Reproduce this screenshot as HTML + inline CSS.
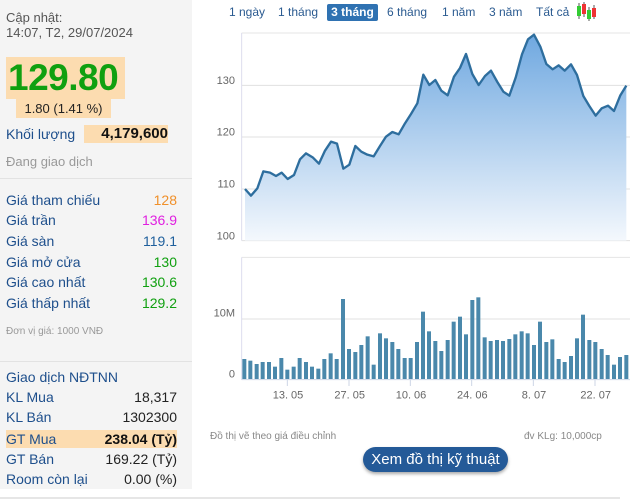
<!DOCTYPE html>
<html><head><meta charset="utf-8"><style>
body{margin:0;width:640px;height:499px;background:#fff;font-family:"Liberation Sans",Arial,sans-serif;position:relative;overflow:hidden}
.a{position:absolute;white-space:nowrap}
#lp{position:absolute;left:0;top:0;width:192px;height:489px;background:#f4f4f4}
.lbl{color:#1e4f8c;font-size:14px}
.r{position:absolute;left:6px;width:171px;font-size:14px;height:18px;line-height:18px}
.r span{position:absolute;right:0;top:0}
.tab{position:absolute;top:4px;font-size:12px;color:#2a5a90;line-height:17px}
</style></head><body>
<div id="lp">
<div class="a" style="left:6px;top:10px;font-size:13px;color:#555">Cập nhật:</div>
<div class="a" style="left:6px;top:25px;font-size:13px;color:#555">14:07, T2, 29/07/2024</div>
<div class="a" style="left:6px;top:57px;width:119px;height:42px;background:#fcdcb0"></div>
<div class="a" style="left:8px;top:57px;font-size:37px;font-weight:bold;color:#10a010;line-height:42px;letter-spacing:-0.5px">129.80</div>
<div class="a" style="left:16px;top:99px;width:95px;height:19px;background:#fcdcb0;font-size:13px;text-align:center;line-height:19px;color:#222">1.80 (1.41 %)</div>
<div class="a lbl" style="left:6px;top:126px;font-size:14px">Khối lượng</div>
<div class="a" style="left:84px;top:125px;width:84px;height:18px;background:#fcdcb0;font-size:15px;font-weight:bold;text-align:right;line-height:18px;color:#111">4,179,600</div>
<div class="a" style="left:6px;top:154px;font-size:13px;color:#999">Đang giao dịch</div>
<div class="a" style="left:0;top:178px;width:192px;height:1px;background:#e2e2e2"></div>
<div class="r lbl" style="top:191px">Giá tham chiếu<span style="color:#f0902a">128</span></div>
<div class="r lbl" style="top:211px">Giá trần<span style="color:#e020e0">136.9</span></div>
<div class="r lbl" style="top:232px">Giá sàn<span style="color:#1e5f9c">119.1</span></div>
<div class="r lbl" style="top:253px">Giá mở cửa<span style="color:#10a010">130</span></div>
<div class="r lbl" style="top:273px">Giá cao nhất<span style="color:#10a010">130.6</span></div>
<div class="r lbl" style="top:294px">Giá thấp nhất<span style="color:#10a010">129.2</span></div>
<div class="a" style="left:6px;top:326px;font-size:10px;color:#999">Đơn vị giá: 1000 VNĐ</div>
<div class="a" style="left:0;top:361px;width:192px;height:1px;background:#e2e2e2"></div>
<div class="r lbl" style="top:368px">Giao dịch NĐTNN</div>
<div class="r lbl" style="top:388px">KL Mua<span style="color:#222">18,317</span></div>
<div class="r lbl" style="top:408px">KL Bán<span style="color:#222">1302300</span></div>
<div class="r lbl" style="top:430px;background:#fcdcb0">GT Mua<span style="color:#111;font-weight:bold">238.04 (Tỷ)</span></div>
<div class="r lbl" style="top:450px">GT Bán<span style="color:#222">169.22 (Tỷ)</span></div>
<div class="r lbl" style="top:470px">Room còn lại<span style="color:#222">0.00 (%)</span></div>
</div>
<div class="a" style="left:0;top:497px;width:620px;height:2px;background:#e6e6e6"></div>

<div class="tab" style="left:229px">1 ngày</div>
<div class="tab" style="left:278px">1 tháng</div>
<div class="tab" style="left:327px;top:4px;width:51px;height:17px;background:#2f72b2;border-radius:2px;color:#fff;text-align:center;font-weight:bold">3 tháng</div>
<div class="tab" style="left:387px">6 tháng</div>
<div class="tab" style="left:442px">1 năm</div>
<div class="tab" style="left:489px">3 năm</div>
<div class="tab" style="left:536px">Tất cả</div>
<svg class="a" style="left:576px;top:2px" width="24" height="20">
<line x1="3" y1="1" x2="3" y2="17" stroke="#555"/><rect x="1" y="4" width="4" height="10" fill="#3c3"/>
<line x1="8" y1="0" x2="8" y2="15" stroke="#555"/><rect x="6" y="2" width="4" height="10" fill="#e33"/>
<line x1="13" y1="5" x2="13" y2="19" stroke="#555"/><rect x="11" y="8" width="4" height="9" fill="#3c3"/>
<line x1="18" y1="3" x2="18" y2="17" stroke="#555"/><rect x="16" y="6" width="4" height="9" fill="#e33"/>
</svg>

<svg class="a" style="left:200px;top:0" width="440" height="250" viewBox="0 0 1320 750">
<defs><linearGradient id="g" x1="0" y1="0" x2="0" y2="1"><stop offset="0" stop-color="#6fa8e0"/><stop offset="1" stop-color="#f4f8fd"/></linearGradient></defs>
<line x1="125" y1="99" x2="1290" y2="99" stroke="#e4e4e4" stroke-width="3"/>
<g stroke="#e0e0e0" stroke-width="3"><line x1="125" y1="256" x2="1290" y2="256"/><line x1="125" y1="411" x2="1290" y2="411"/><line x1="125" y1="567" x2="1290" y2="567"/><line x1="125" y1="722" x2="1290" y2="722"/></g>
<line x1="125" y1="99" x2="125" y2="722" stroke="#dde" stroke-width="3"/>
<polygon fill="url(#g)" points="135,722 135,567 153,587 172,565 190,514 210,518 228,528 245,518 263,537 282,525 300,478 318,460 338,472 357,491 375,452 393,425 411,431 430,506 448,494 466,438 484,455 502,464 521,469 540,438 558,410 577,396 596,403 615,370 633,342 652,310 670,224 688,255 706,240 724,272 743,286 762,230 780,204 798,162 817,222 836,255 855,228 873,212 892,246 910,275 928,287 947,233 966,163 984,118 1002,104 1021,140 1039,192 1058,208 1076,196 1094,212 1113,193 1131,225 1150,288 1168,318 1187,347 1205,325 1224,317 1242,333 1261,286 1279,257 1279,722"/>
<polyline fill="none" stroke="#2e6e9e" stroke-width="7" stroke-linejoin="round" points="135,567 153,587 172,565 190,514 210,518 228,528 245,518 263,537 282,525 300,478 318,460 338,472 357,491 375,452 393,425 411,431 430,506 448,494 466,438 484,455 502,464 521,469 540,438 558,410 577,396 596,403 615,370 633,342 652,310 670,224 688,255 706,240 724,272 743,286 762,230 780,204 798,162 817,222 836,255 855,228 873,212 892,246 910,275 928,287 947,233 966,163 984,118 1002,104 1021,140 1039,192 1058,208 1076,196 1094,212 1113,193 1131,225 1150,288 1168,318 1187,347 1205,325 1224,317 1242,333 1261,286 1279,257"/>
<g font-family="Liberation Sans,sans-serif" font-size="33" fill="#666" text-anchor="end"><text x="105" y="252">130</text><text x="105" y="406">120</text><text x="105" y="562">110</text><text x="105" y="718">100</text></g>
</svg>

<svg class="a" style="left:200px;top:250px" width="440" height="249" viewBox="0 0 1320 747">
<line x1="125" y1="22" x2="1290" y2="22" stroke="#e4e4e4" stroke-width="3"/>
<line x1="125" y1="207" x2="1290" y2="207" stroke="#e0e0e0" stroke-width="3"/>
<line x1="125" y1="22" x2="125" y2="390" stroke="#dde" stroke-width="3"/>
<line x1="125" y1="389" x2="1290" y2="389" stroke="#cdd6e6" stroke-width="3"/>
<g stroke="#cdd6e6" stroke-width="3"><line x1="262" y1="389" x2="262" y2="408"/><line x1="447" y1="389" x2="447" y2="408"/><line x1="631" y1="389" x2="631" y2="408"/><line x1="815" y1="389" x2="815" y2="408"/><line x1="1000" y1="389" x2="1000" y2="408"/><line x1="1185" y1="389" x2="1185" y2="408"/></g>
<g fill="#4a88ab">
<rect x="127" y="327" width="12" height="60"/><rect x="145" y="332" width="12" height="55"/><rect x="164" y="342" width="12" height="45"/><rect x="182" y="336" width="12" height="51"/><rect x="201" y="336" width="12" height="51"/><rect x="219" y="350" width="12" height="37"/><rect x="238" y="324" width="12" height="63"/><rect x="256" y="359" width="12" height="28"/><rect x="275" y="350" width="12" height="37"/><rect x="293" y="324" width="12" height="63"/><rect x="312" y="336" width="12" height="51"/><rect x="330" y="350" width="12" height="37"/><rect x="349" y="356" width="12" height="31"/><rect x="367" y="327" width="12" height="60"/><rect x="386" y="310" width="12" height="77"/><rect x="404" y="327" width="12" height="60"/><rect x="423" y="147" width="12" height="240"/><rect x="441" y="297" width="12" height="90"/><rect x="460" y="306" width="12" height="81"/><rect x="478" y="285" width="12" height="102"/><rect x="497" y="259" width="12" height="128"/><rect x="515" y="344" width="12" height="43"/><rect x="534" y="250" width="12" height="137"/><rect x="552" y="265" width="12" height="122"/><rect x="571" y="276" width="12" height="111"/><rect x="589" y="297" width="12" height="90"/><rect x="608" y="324" width="12" height="63"/><rect x="626" y="324" width="12" height="63"/><rect x="645" y="276" width="12" height="111"/><rect x="663" y="185" width="12" height="202"/><rect x="681" y="244" width="12" height="143"/><rect x="700" y="273" width="12" height="114"/><rect x="718" y="303" width="12" height="84"/><rect x="737" y="270" width="12" height="117"/><rect x="755" y="215" width="12" height="172"/><rect x="774" y="200" width="12" height="187"/><rect x="792" y="253" width="12" height="134"/><rect x="811" y="150" width="12" height="237"/><rect x="829" y="142" width="12" height="245"/><rect x="848" y="262" width="12" height="125"/><rect x="866" y="273" width="12" height="114"/><rect x="885" y="270" width="12" height="117"/><rect x="903" y="273" width="12" height="114"/><rect x="922" y="267" width="12" height="120"/><rect x="940" y="253" width="12" height="134"/><rect x="959" y="244" width="12" height="143"/><rect x="977" y="250" width="12" height="137"/><rect x="996" y="285" width="12" height="102"/><rect x="1014" y="215" width="12" height="172"/><rect x="1033" y="276" width="12" height="111"/><rect x="1051" y="268" width="12" height="119"/><rect x="1070" y="327" width="12" height="60"/><rect x="1088" y="336" width="12" height="51"/><rect x="1107" y="318" width="12" height="69"/><rect x="1125" y="265" width="12" height="122"/><rect x="1143" y="194" width="12" height="193"/><rect x="1162" y="270" width="12" height="117"/><rect x="1180" y="276" width="12" height="111"/><rect x="1199" y="297" width="12" height="90"/><rect x="1217" y="315" width="12" height="72"/><rect x="1236" y="344" width="12" height="43"/><rect x="1254" y="321" width="12" height="66"/><rect x="1273" y="315" width="12" height="72"/>
</g>
<g font-family="Liberation Sans,sans-serif" font-size="33" fill="#666"><text x="105" y="200" text-anchor="end">10M</text><text x="105" y="383" text-anchor="end">0</text></g>
<g font-family="Liberation Sans,sans-serif" font-size="33" fill="#666" text-anchor="middle"><text x="264" y="445">13. 05</text><text x="449" y="445">27. 05</text><text x="633" y="445">10. 06</text><text x="817" y="445">24. 06</text><text x="1002" y="445">8. 07</text><text x="1187" y="445">22. 07</text></g>
</svg>
<div class="a" style="left:210px;top:431px;font-size:10px;color:#888">Đồ thị vẽ theo giá điều chỉnh</div>
<div class="a" style="left:524px;top:431px;font-size:10px;color:#888">đv KLg: 10,000cp</div>
<div class="a" style="left:363px;top:447px;width:145px;height:25px;border-radius:13px;background:#245a98;color:#fff;font-size:15px;text-align:center;line-height:25px;box-shadow:0 2px 3px #aaa">Xem đồ thị kỹ thuật</div>
</body></html>
